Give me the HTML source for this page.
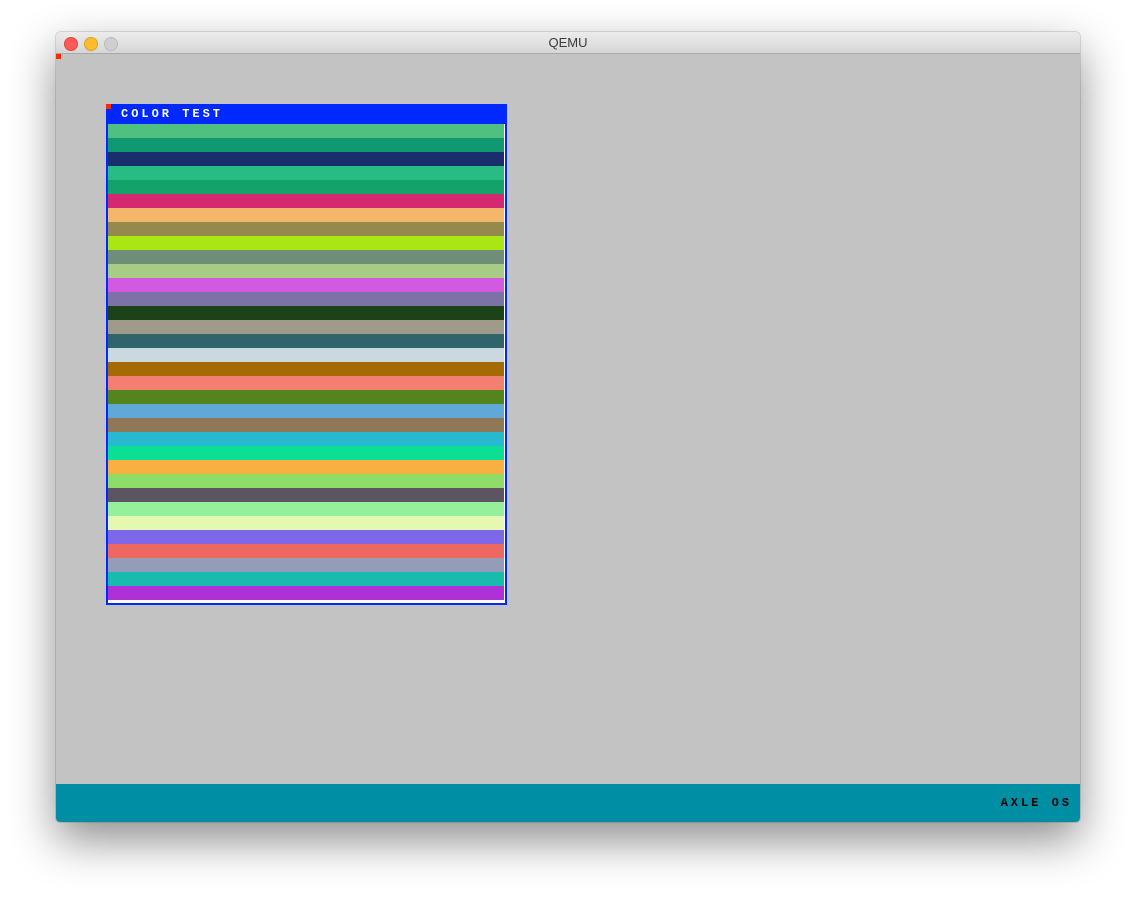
<!DOCTYPE html><html><head><style>
body{margin:0;width:1136px;height:902px;background:#fff;position:relative;overflow:hidden;font-family:"Liberation Sans",sans-serif}
.win{position:absolute;left:56px;top:32px;width:1024px;height:790px;border-radius:5px 5px 4px 4px;overflow:hidden;box-shadow:0 18px 45px rgba(0,0,0,.45),0 0 0 1px rgba(0,0,0,.12)}
.tb{position:absolute;left:0;top:0;width:100%;height:21px;background:linear-gradient(#ececec,#d6d6d6);border-bottom:1px solid #a9a9a9;text-align:center;font-size:13px;line-height:22px;color:#3a3a3a}
.dot{position:absolute;top:5px;width:12px;height:12px;border-radius:50%}
.scr{position:absolute;left:0;top:22px;width:100%;height:730px;background:#c3c3c3}
.bar{position:absolute;left:0;top:752px;width:100%;height:38px;background:#008ea4}
.cw{position:absolute;left:50px;top:50px;width:397px;height:497px;border:2px solid #0028ff;background:#fff}
.ct{height:18px;background:#0028ff;color:#fff;font:bold 12px "Liberation Mono",monospace;letter-spacing:3px;line-height:16px;padding-left:13px}
.s{height:14px;width:396px}
</style></head><body>
<div class="win">
<div class="tb">QEMU
<div class="dot" style="left:8px;background:#fc5b57;border:0.5px solid #e0443e"></div>
<div class="dot" style="left:28px;background:#fdbb2d;border:0.5px solid #dea123"></div>
<div class="dot" style="left:48px;background:#cfcfcf;border:0.5px solid #bbb"></div>
</div>
<div class="scr">
<div style="position:absolute;left:0;top:0;width:5px;height:5px;background:#ff2a00"></div>
<div class="cw">
<div style="position:absolute;left:-2px;top:-2px;width:5px;height:5px;background:#ff2a00"></div>
<div class="ct">COLOR TEST</div>
<div class="s" style="background:#50c080"></div>
<div class="s" style="background:#109870"></div>
<div class="s" style="background:#1a2e6e"></div>
<div class="s" style="background:#28bc84"></div>
<div class="s" style="background:#12a26a"></div>
<div class="s" style="background:#d42870"></div>
<div class="s" style="background:#f4b66a"></div>
<div class="s" style="background:#948a4c"></div>
<div class="s" style="background:#a8e614"></div>
<div class="s" style="background:#6e8e7a"></div>
<div class="s" style="background:#a8cc84"></div>
<div class="s" style="background:#d25ae0"></div>
<div class="s" style="background:#7c72a6"></div>
<div class="s" style="background:#1c4218"></div>
<div class="s" style="background:#a09a8a"></div>
<div class="s" style="background:#30646c"></div>
<div class="s" style="background:#cad8e0"></div>
<div class="s" style="background:#a46a04"></div>
<div class="s" style="background:#f47e70"></div>
<div class="s" style="background:#54841c"></div>
<div class="s" style="background:#60a8d8"></div>
<div class="s" style="background:#8e7858"></div>
<div class="s" style="background:#28b8d0"></div>
<div class="s" style="background:#0ae094"></div>
<div class="s" style="background:#f8b040"></div>
<div class="s" style="background:#90dc68"></div>
<div class="s" style="background:#5c5460"></div>
<div class="s" style="background:#94f09a"></div>
<div class="s" style="background:#e4f8b0"></div>
<div class="s" style="background:#7c68e8"></div>
<div class="s" style="background:#ec6860"></div>
<div class="s" style="background:#949cb8"></div>
<div class="s" style="background:#18bcac"></div>
<div class="s" style="background:#b030d8"></div>
</div>
</div>
<div class="bar"><div style="position:absolute;right:8px;top:12px;font:bold 12px 'Liberation Mono',monospace;letter-spacing:3px;color:#000">AXLE OS</div></div>
</div>
</body></html>
